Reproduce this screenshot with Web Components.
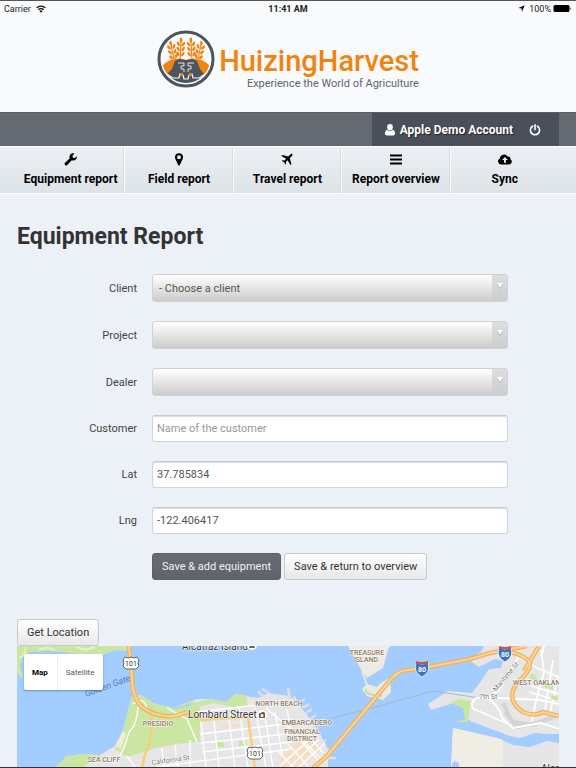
<!DOCTYPE html>
<html lang="en">
<head>
<meta charset="utf-8">
<meta name="viewport" content="width=device-width, initial-scale=1">
<title>Huizing Harvest - Equipment Report</title>
<style>
    html, body {
        margin: 0;
        height: 100%;
    }

    body {
        font-family: Roboto, "Liberation Sans", sans-serif;
        font-size: 11px;
        color: #444;
        background-color: #ebf1f6;
    }
</style>
</head>
<body>
<harvest-app></harvest-app>

<script>
class StatusBar extends HTMLElement {
    constructor() {
        super();
        const shadow = this.attachShadow({ mode: 'open' });
        shadow.innerHTML = `
            <style>
                :host {
                    display: grid;
                    grid-template-columns: 1fr auto 1fr;
                    align-items: center;
                    height: 15px;
                    padding: 0 4px;
                    background-color: #f9fafc;
                    font-size: 9px;
                    color: #222;
                }

                span {
                    display: flex;
                    align-items: center;
                    gap: 5px;
                }

                .time {
                    font-weight: bold;
                }

                .power {
                    justify-content: flex-end;
                    gap: 2px;
                }

                .arrow {
                    margin-right: 2px;
                }
            </style>
            <span>Carrier
                <svg width="10" height="8" viewBox="0 0 10 8" fill="none" stroke="#111" stroke-width="1.3">
                    <path d="M.6 2.9a6.2 6.2 0 0 1 8.8 0M2.3 4.7a3.8 3.8 0 0 1 5.4 0"/>
                    <path d="M5 7.8L3.4 6.1a2.3 2.3 0 0 1 3.2 0z" fill="#111" stroke="none"/>
                </svg>
            </span>
            <span class="time">11:41 AM</span>
            <span class="power">
                <svg class="arrow" width="7" height="7" viewBox="0 0 7 7"><path d="M6.8.2L3.9 6.9 3.5 3.5.2 3.1z" fill="#111"/></svg>
                100%
                <svg width="19" height="7" viewBox="0 0 19 7"><rect x=".5" width="16" height="7" rx="1.5" fill="#000"/><path d="M17.3 2.3q1.5 1.2 0 2.4z" fill="#000"/></svg>
            </span>
        `;
    }
}

class SiteLogo extends HTMLElement {
    constructor() {
        super();
        const shadow = this.attachShadow({ mode: 'open' });
        shadow.innerHTML = `
            <style>
                :host {
                    display: flex;
                    justify-content: center;
                    gap: 4px;
                    height: 82px;
                    padding-top: 14px;
                    box-sizing: content-box;
                    background-color: #f9fafc;
                }

                .words {
                    display: flex;
                    flex-direction: column;
                    align-items: flex-end;
                    padding-top: 14px;
                }

                .name {
                    font-size: 29px;
                    line-height: 34px;
                    font-weight: 500;
                    color: #f28311;
                }

                .tagline {
                    line-height: 12px;
                    color: #5d656d;
                }
            </style>
            <svg width="58" height="58" viewBox="0 0 58 58">
                <defs>
                    <clipPath id="disc"><circle cx="29" cy="29" r="24"/></clipPath>
                    <g id="ear" fill="#f28311">
                        <path d="M-.6 0h1.2v24h-1.2z"/>
                        <ellipse cy="-2" rx="1.4" ry="2.4"/>
                        <g id="grains">
                            <ellipse cx="-2.5" cy="2" rx="1.3" ry="2.500" transform="rotate(-32 -2.5 2)"/>
                            <ellipse cx="2.5" cy="2" rx="1.3" ry="2.500" transform="rotate(32 2.5 2)"/>
                        </g>
                        <use href="#grains" y="5"/>
                        <use href="#grains" y="10"/>
                    </g>
                </defs>
                <circle cx="29" cy="29" r="27" fill="#f9fafc" stroke="#4b555d" stroke-width="3"/>
                <g clip-path="url(#disc)">
                    <path d="M3 38Q15 25 29 30Q43 25 55 38L50 43 40 48H18L8 43z" fill="#f28311"/>
                    <use href="#ear" transform="translate(14 15) rotate(-12)"/>
                    <use href="#ear" transform="translate(24 12) rotate(3)"/>
                    <use href="#ear" transform="translate(34 12) rotate(-3)"/>
                    <use href="#ear" transform="translate(44 15) rotate(12)"/>
                    <path d="M18 31l4-2 7 1 7-1 4 2 3 8 4 5-10 11H21L10 44l5-5z" fill="#4b555d"/>
                    <path d="M2 39l14 9h6l1-4 3 1 1 4h4l1-4 3-1 1 4h6l14-9" fill="none" stroke="#f9fafc" stroke-width="1.2"/>
                    <path d="M21 33h6v3h-3v3h3v3m10-9h-6v3h3v3h-3v3" fill="none" stroke="#e3e6e8"/>
                    <path d="M23 43h3v3h-3zm9 0h3v3h-3z" fill="#f28311"/>
                </g>
            </svg>
            <div class="words">
                <div class="name">HuizingHarvest</div>
                <div class="tagline">Experience the World of Agriculture</div>
            </div>
        `;
    }
}

class AccountBar extends HTMLElement {
    constructor() {
        super();
        const shadow = this.attachShadow({ mode: 'open' });
        shadow.innerHTML = `
            <style>
                :host {
                    display: flex;
                    justify-content: flex-end;
                    height: 33px;
                    padding: 0 17px;
                    border-top: 1px solid #5b5f66;
                    background-color: #656971;
                    font-size: 12px;
                }

                .account {
                    display: flex;
                    align-items: center;
                    gap: 16px;
                    padding: 0 18px 0 12px;
                    background-color: #4a5059;
                }

                a {
                    display: flex;
                    align-items: center;
                    gap: 4px;
                    color: #fff;
                    font-weight: bold;
                    text-decoration: none;
                    text-shadow: 1px 1px 1px #222;
                }
            </style>
            <div class="account">
                <a href="#account">
                    <svg width="12" height="12" viewBox="0 0 12 12" fill="#fff"><ellipse cx="6" cy="3.3" rx="2.8" ry="3.2"/><path d="M3 5.8Q.9 6.6.9 9.6.9 11.4 2.5 11.4h7Q11.1 11.4 11.1 9.6 11.1 6.6 9 5.8 6 8.6 3 5.8z"/></svg>
                    <slot></slot>
                </a>
                <a href="#logout" aria-label="Log out">
                    <svg width="12" height="12" viewBox="0 0 12 12" fill="none" stroke="#fff" stroke-width="1.6" stroke-linecap="round"><path d="M3.6 2.2a4.6 4.6 0 1 0 4.8 0M6 .8v4.8"/></svg>
                </a>
            </div>
        `;
    }
}

const navIcons = {
    wrench: '<path d="M12.8 3.2a3.6 3.6 0 0 1-5 4L3.300 11.900a1.500 1.500 0 0 1-2.200-2.200L5.800 5.200a3.600 3.600 0 0 1 4.700-4.700L8.600 2.400v2l2 .8z"/>',
    marker: '<path fill-rule="evenodd" d="M7 .3a4 4 0 0 1 4 4c0 1-.3 1.700-.7 2.500L7.700 12.300q-.7.800-1.400 0L3.700 6.800C3.300 6 3 5.300 3 4.300a4 4 0 0 1 4-4zm0 2a2 2 0 1 0 0 4 2 2 0 0 0 0-4z"/>',
    plane: '<path d="M12.200.8c.8.800 0 2-.8 2.800L9.800 5.200l1.600 6-.9.800-2.900-4.800-1.700 1.700.2 1.900-.7.700-1.300-2.200-2.300-1.300.7-.7 2 .2 1.600-1.700L1.400 2.900l.8-.9 6.100 1.600L9.800 2c.8-.8 1.800-1.700 2.400-1.200z"/>',
    bars: '<path d="M1 1.500h12v2H1zM1 5.500h12v2H1zM1 9.500h12v2H1z"/>',
    cloud: '<path fill-rule="evenodd" d="M3.200 11.500A3.200 3.200 0 0 1 1.900 5.400 4.100 4.100 0 0 1 9.500 3.600a2.300 2.300 0 0 1 2.900 2.700A2.800 2.800 0 0 1 11.300 11.500zM6.900 4.100L4.100 7h1.900v2.800h1.900V7h1.900z"/>'
};

class NavItem extends HTMLElement {
    constructor() {
        super();
        const shadow = this.attachShadow({ mode: 'open' });
        shadow.innerHTML = `
            <style>
                :host {
                    display: block;
                    border-right: 1px solid #f8fbfc;
                    box-shadow: inset -1px 0 #d8dde1;
                }

                :host(:last-child) {
                    border-right: 0;
                    box-shadow: none;
                }

                a {
                    display: flex;
                    flex-direction: column;
                    align-items: center;
                    gap: 6px;
                    padding: 6px 0;
                    font-size: 12px;
                    line-height: 15px;
                    font-weight: bold;
                    color: #000;
                    text-decoration: none;
                    white-space: nowrap;
                }
            </style>
            <a>
                <svg width="14" height="13" viewBox="0 0 14 13"></svg>
                <slot></slot>
            </a>
        `;
    }

    connectedCallback() {
        const icon = this.getAttribute('icon');
        this.shadowRoot.querySelector('svg').innerHTML = navIcons[icon];
        this.shadowRoot.querySelector('a').href = '#' + icon;
    }
}

class NavBar extends HTMLElement {
    constructor() {
        super();
        const shadow = this.attachShadow({ mode: 'open' });
        shadow.innerHTML = `
            <style>
                :host {
                    display: block;
                    border-top: 1px solid #fff;
                    border-bottom: 1px solid #fff;
                    background: linear-gradient(#ebf0f4, #dde3e7);
                }

                nav {
                    display: grid;
                    grid-template-columns: repeat(5, 1fr);
                    padding: 0 17px;
                }
            </style>
            <nav><slot></slot></nav>
        `;
    }
}

const controlStyle = `
    .control {
        display: block;
        box-sizing: border-box;
        width: 100%;
        margin: 0;
        border: 1px solid #d2d5d7;
        border-radius: 3px;
        font: inherit;
        color: #555;
    }
`;

const fieldStyle = `
    :host {
        display: grid;
        grid-template-columns: 120px 1fr;
        gap: 15px;
        align-items: center;
    }

    label {
        text-align: right;
        color: #444;
    }
`;

class SelectField extends HTMLElement {
    constructor() {
        super();
        const shadow = this.attachShadow({ mode: 'open' });
        shadow.innerHTML = `
            <style>
                ${fieldStyle}
                ${controlStyle}
                .box {
                    position: relative;
                }

                .control {
                    appearance: none;
                    height: 28px;
                    padding: 0 24px 0 6px;
                    border-color: #d0d3d5;
                    background: linear-gradient(#fff, #ccc);
                }

                .arrow {
                    position: absolute;
                    top: 1px;
                    right: 1px;
                    bottom: 1px;
                    width: 15px;
                    display: flex;
                    justify-content: center;
                    padding-top: 8px;
                    box-sizing: border-box;
                    border-radius: 0 2px 2px 0;
                    background: linear-gradient(#dedede, #cdcdcd);
                    pointer-events: none;
                }
            </style>
            <label for="control"></label>
            <div class="box">
                <select id="control" class="control"><option></option></select>
                <span class="arrow"><svg width="6" height="6" viewBox="0 0 6 6"><path d="M0 1h6L3 6z" fill="#aaa"/><path d="M0 0h6L3 5z" fill="#fff"/></svg></span>
            </div>
        `;
    }

    connectedCallback() {
        this.shadowRoot.querySelector('label').textContent = this.getAttribute('label');
        this.shadowRoot.querySelector('option').textContent = this.getAttribute('value') || '';
    }
}

class TextField extends HTMLElement {
    constructor() {
        super();
        const shadow = this.attachShadow({ mode: 'open' });
        shadow.innerHTML = `
            <style>
                ${fieldStyle}
                ${controlStyle}
                .control {
                    height: 27px;
                    padding: 0 4px;
                    background-color: #fff;
                    border-top-color: #c6c8ca;
                    box-shadow: inset 0 1px 1px #ddd;
                }

                .control::placeholder {
                    color: #999;
                }
            </style>
            <label for="control"></label>
            <input id="control" class="control" type="text">
        `;
    }

    connectedCallback() {
        const input = this.shadowRoot.querySelector('input');
        this.shadowRoot.querySelector('label').textContent = this.getAttribute('label');
        input.placeholder = this.getAttribute('placeholder') || '';
        input.value = this.getAttribute('value') || '';
    }
}

class PushButton extends HTMLElement {
    constructor() {
        super();
        const shadow = this.attachShadow({ mode: 'open' });
        shadow.innerHTML = `
            <style>
                :host {
                    display: inline-flex;
                }

                button {
                    height: 27px;
                    padding: 0 9px;
                    border: 1px solid #c8cbcd;
                    border-radius: 3px;
                    background: linear-gradient(#fff, #e8e8e8);
                    font: inherit;
                    color: #333;
                    white-space: nowrap;
                }

                :host([primary]) button {
                    border-color: #5c6068;
                    background: linear-gradient(#686c70, #5f636d);
                    color: #f2f2f2;
                }
            </style>
            <button type="button"><slot></slot></button>
        `;
    }
}

class LocationMap extends HTMLElement {
    constructor() {
        super();
        const shadow = this.attachShadow({ mode: 'open' });
        shadow.innerHTML = `
            <style>
                :host {
                    display: block;
                    position: relative;
                    min-height: 120px;
                    overflow: hidden;
                    background-color: #a3ccff;
                }

                .map {
                    position: absolute;
                    width: 100%;
                    height: 100%;
                }

                .types {
                    position: absolute;
                    top: 8px;
                    left: 7px;
                    display: flex;
                    border-radius: 2px;
                    background-color: #fff;
                    box-shadow: 0 1px 2px rgba(0, 0, 0, 0.3);
                }

                .types button {
                    height: 36px;
                    padding: 0 9px 0 8px;
                    border: 0;
                    background: none;
                    font: inherit;
                    font-size: 8px;
                    color: #565656;
                }

                .types button:first-child {
                    font-weight: bold;
                    color: #000;
                    border-right: 1px solid #eee;
                }

                .area {
                    font-size: 7px;
                    font-weight: 500;
                    fill: #8c765c;
                    text-anchor: middle;
                }

                .road {
                    font-size: 7px;
                    fill: #777;
                }

                .place {
                    font-size: 10px;
                    fill: #333;
                }

                .halo text {
                    stroke: #fff;
                    stroke-width: 1px;
                    stroke-linejoin: round;
                    paint-order: stroke;
                }

                .shield {
                    font-size: 7px;
                    text-anchor: middle;
                    fill: #333;
                }
            </style>
            <svg class="map" viewBox="0 0 542 122" preserveAspectRatio="xMinYMin slice">
                <!-- Marin headlands -->
                <path d="M0 0H116L108 5 98 4 88 8 62 9 48 6 30 5 12 6 6 12 3 20 6 31 3 31 0 27z" fill="#cbe6a3"/>
                <path d="M2 12Q8 10 9 1M22 4Q30 0 38 4M60 1l8 3 10-3" fill="none" stroke="#e4f1c9" stroke-width="2"/>

                <!-- San Francisco -->
                <path d="M38 122L50 110 66 108 83 109 98 100 106 85 111 65 116 48 126 50 136 57 156 62 180 53 193 53 210 56 218 48 228 50 241 52 251 47 273 50 283 60 293 73 303 88 311 103V122z" fill="#e7e6e6"/>
                <path d="M38 122L50 110 66 108 83 109 84 112 72 116 66 122z" fill="#cbe6a3"/>
                <path d="M116 48L126 50 136 57 156 62 176 55 183 62 183 96 158 98 136 103 110 111 98 103 106 85 111 65z" fill="#cbe6a3"/>
                <path d="M98 100l8-15 3 3-5 15z" fill="#f1ead4"/>
                <path d="M176 57L193 53 210 56 218 48 229 49 231 60 215 61 196 57 180 61zM200 96h7v5h-7zM222 95h7v5h-7zM175 70l8 4v22h-8z" fill="#cbe6a3"/>
                <path d="M155 62l14-3 3-2 3 2-18 4z" fill="#a3ccff"/>
                <path d="M203 80l22-3v3l-22 3zM266 108l25-20 14 15-20 19h-24z" fill="#f2dfc8"/>
                <g fill="none" stroke="#e0dede" stroke-width="2.500">
                    <path d="M241 45l5 6M252 47l-7-4M271 42l2 12M277 50l3 8M282 57l6-4M286 62l6-4M289 67l6-4M293 73l6-4M297 78l5-4M300 82l6-4M305 96l4-2M310 104h8M311 112h8"/>
                </g>
                <g fill="none" stroke="#fff" stroke-width="1.300">
                    <path d="M184 76l5 46M197 74l5 48M212 73l6 49M222 62l9 60M238 62l11 60M248 70l8 52M258 66l7 42M270 63l5 28"/>
                    <path d="M183 88l86-10M184 97l96-10M185 106l90-10M140 121l134-18M180 66l51-6 50-1M249 62l23 20 36 34M150 62l20 11 10 23"/>
                    <path d="M263 120l32-29M272 122l30-29M281 122l27-25M262 106l15 16M271 98l20 22M281 92l22 24M288 85l18 22"/>
                    <path d="M116 58q12-9 14 6M121 61q-1 18-9 25-6 21-10 24M173 94V122M158 99l3 23M145 102l2 20M110 110l9 12"/>
                </g>
                <path d="M134 66q2 30-6 42l-3 14M170 66l15 8 46-3 7 51" fill="none" stroke="#f7cf75" stroke-width="2.500"/>

                <!-- Treasure Island and Yerba Buena -->
                <path d="M331 0H373L371 4 366 22 350 32 345 25z" fill="#eeebe6"/>
                <path d="M345 25l6 17" stroke="#e9e6e0" stroke-width="2"/>
                <path d="M345 43L350 38 360 41 365 36 373 32 374 46 366 54 350 50z" fill="#edeae4"/>
                <path d="M349 43q-2 6 16 7" fill="none" stroke="#c5dfa0" stroke-width="2"/>

                <!-- Oakland and Alameda -->
                <path d="M452 14L462 21 478 13 486 15 484 22 472 23 462 38 455 47 431 45 411 58 414 64 430 59 448 54 452 56 450 72 453 75 493 90 503 92 518 87 530 88 542 88V0H467L464 6z" fill="#e7e6e6"/>
                <path d="M431 57l12-4 11 2-3 21h-13l10-3-2-11-9-4z" fill="#c8e6a0"/>
                <path d="M436 82L480 92 496 99 513 101 530 95 542 97V122H434z" fill="#e7e6e6"/>
                <path d="M436 82L480 92 486 94V122H434z" fill="#f0ede4"/>
                <path d="M435 118l3-3 4 2v5h-7z" fill="#a3ccff"/>
                <path d="M488 66l12 15 20-4 22-8M486 57l9 19 25 3" fill="none" stroke="#d4d4d4" stroke-width="4"/>
                <path d="M301 82L316 72 373 57 416 45 463 52" fill="none" stroke="#a9b6c6"/>
                <g fill="none" stroke="#fff" stroke-width="1.800">
                    <path d="M502 10l-20 34-10 7-13 1q-7 6-2 11l34 15M463 51l60 3 19 4M470 52q13 8 15 20l11 10 28-5 18 6M498 8l22 14 22 9"/>
                    <path d="M524 4l3 22-8 29-4 20M536 14l-8 50M541 30l-8 38M514 40l28 8M512 46l30 9M527 0l-2 10"/>
                </g>
                <path d="M514 27l4 2 3 6-8-2zM528 38l8 2v4l-8-2zM535 49l6 2v4l-7-2z" fill="#c8e6a0"/>
                <g fill="none" stroke-linejoin="round">
                    <g stroke="#eeb362" stroke-width="4.500">
                        <path id="highway" d="M112 0L115 32Q115 52 126 62 148 76 170 66M295 123L310 110 370 38Q380 24 391 24L406 22 453 13 473 7 510 0M488 5Q510 9 513 18 513 26 500 37 488 54 506 66 518 71 526 66L542 70M522 0l-15 25"/>
                    </g>
                    <use href="#highway" stroke="#fcd392" stroke-width="2"/>
                </g>

                <g class="halo">
                    <text class="place" x="165" y="4">Alcatraz Island</text>
                    <text class="place" x="171" y="72">Lombard Street</text>
                    <text class="place" x="524" y="126">Alameda</text>
                    <g class="area">
                        <text x="141" y="80">PRESIDIO</text>
                        <text x="87" y="116">SEA CLIFF</text>
                        <text x="262" y="60">NORTH BEACH</text>
                        <text x="290" y="79">EMBARCADERO</text>
                        <text x="285" y="88">FINANCIAL</text>
                        <text x="285" y="95">DISTRICT</text>
                        <text x="350" y="9">TREASURE</text>
                        <text x="349" y="16">ISLAND</text>
                        <text x="522" y="39">WEST OAKLAND</text>
                    </g>
                    <text class="road" x="462" y="53">7th St</text>
                    <text class="road" transform="translate(479 46) rotate(-50)">Maritime St</text>
                    <text class="road" transform="translate(135 119) rotate(-8)">California St</text>
                </g>
                <text transform="translate(69 51) rotate(-20)" font-size="9" font-style="italic" fill="#4e80c4">Golden Gate</text>

                <circle cx="235" cy="-1" r="5" fill="#fff"/>
                <path d="M232 2h6l-1-3h-4z" fill="#666"/>
                <circle cx="245" cy="69" r="5" fill="#fff"/>
                <path fill-rule="evenodd" d="M242 67h2l1-1h2l1 1v5h-6zm3 1a1.500 1.500 0 1 0 0 3 1.500 1.500 0 0 0 0-3z" fill="#75594f"/>
                <path d="M286 122h11" stroke="#c33" stroke-width="2"/>

                <path id="us" d="M108 11l3 1 3-1 3 1 3-1 2 3q-2 3 0 6l-3 3h-10l-3-3q2-3 0-6z" fill="#fff" stroke="#555" stroke-width=".9"/>
                <use href="#us" x="124" y="90"/>
                <text class="shield" x="114" y="20">101</text>
                <text class="shield" x="238" y="110">101</text>
                <g id="interstate">
                    <path d="M399 17q6 2 12 0 2 7-2 11l-4 3-4-3q-4-4-2-11z" fill="#3b74bd" stroke="#fff" stroke-width=".7"/>
                    <path d="M399 15q6 2 12 0v3h-12z" fill="#d2504a"/>
                    <text class="shield" x="405" y="26" style="fill: #fff; font-weight: bold">80</text>
                </g>
                <use href="#interstate" x="83" y="-15"/>
            </svg>
            <div class="types">
                <button type="button">Map</button>
                <button type="button">Satellite</button>
            </div>
        `;
    }
}

class HarvestApp extends HTMLElement {
    constructor() {
        super();
        const shadow = this.attachShadow({ mode: 'open' });
        shadow.innerHTML = `
            <style>
                :host {
                    display: flex;
                    flex-direction: column;
                    box-sizing: border-box;
                    min-height: 100%;
                    border-top: 1px solid #55565a;
                    border-bottom: 1px solid #333;
                }

                main {
                    flex: 1;
                    display: flex;
                    flex-direction: column;
                    padding: 0 17px;
                }

                h1 {
                    margin: 28px 0 22px;
                    font-size: 23px;
                    line-height: 30px;
                    color: #333;
                }

                form {
                    display: flex;
                    flex-direction: column;
                    gap: 19px;
                    padding-right: 51px;
                }

                .actions {
                    display: flex;
                    gap: 3px;
                    padding-left: 135px;
                }

                .locate {
                    margin-top: 39px;
                }

                location-map {
                    flex: 1;
                }
            </style>
            <status-bar></status-bar>
            <site-logo></site-logo>
            <account-bar>Apple Demo Account</account-bar>
            <nav-bar>
                <nav-item icon="wrench">Equipment report</nav-item>
                <nav-item icon="marker">Field report</nav-item>
                <nav-item icon="plane">Travel report</nav-item>
                <nav-item icon="bars">Report overview</nav-item>
                <nav-item icon="cloud">Sync</nav-item>
            </nav-bar>
            <main>
                <h1>Equipment Report</h1>
                <form>
                    <select-field label="Client" value="- Choose a client"></select-field>
                    <select-field label="Project"></select-field>
                    <select-field label="Dealer"></select-field>
                    <text-field label="Customer" placeholder="Name of the customer"></text-field>
                    <text-field label="Lat" value="37.785834"></text-field>
                    <text-field label="Lng" value="-122.406417"></text-field>
                    <div class="actions">
                        <push-button primary>Save &amp; add equipment</push-button>
                        <push-button>Save &amp; return to overview</push-button>
                    </div>
                </form>
                <div class="locate"><push-button>Get Location</push-button></div>
                <location-map></location-map>
            </main>
        `;
    }
}

customElements.define('status-bar', StatusBar)
customElements.define('site-logo', SiteLogo)
customElements.define('account-bar', AccountBar)
customElements.define('nav-item', NavItem)
customElements.define('nav-bar', NavBar)
customElements.define('select-field', SelectField)
customElements.define('text-field', TextField)
customElements.define('push-button', PushButton)
customElements.define('location-map', LocationMap)
customElements.define('harvest-app', HarvestApp)
</script>
</body>
</html>
